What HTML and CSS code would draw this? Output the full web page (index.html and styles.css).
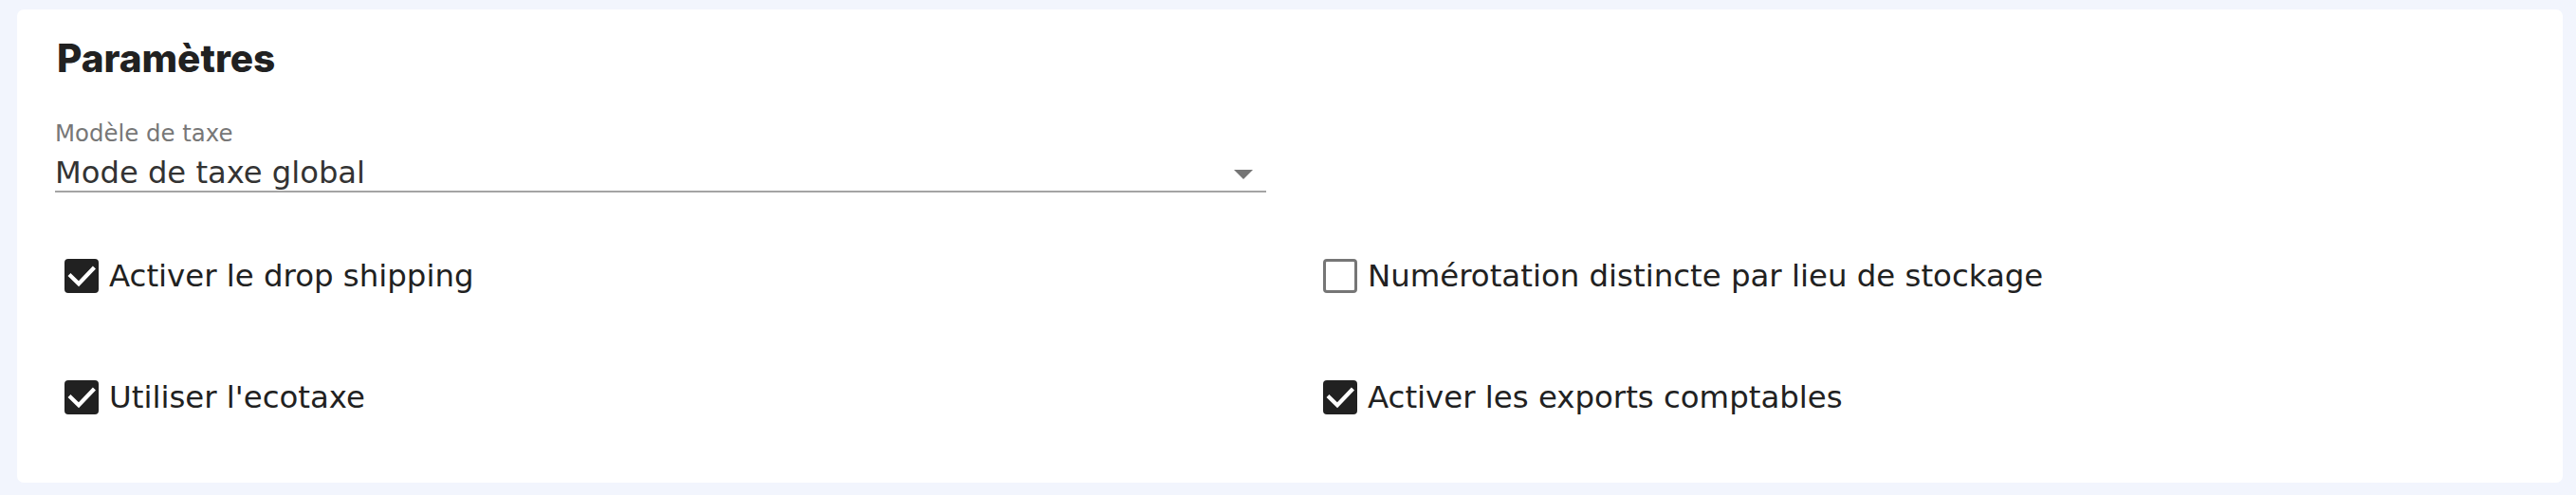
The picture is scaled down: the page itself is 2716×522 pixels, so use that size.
FILE: index.html
```html
<!DOCTYPE html>
<html lang="fr">
<head>
<meta charset="utf-8">
<title>Paramètres</title>
<link rel="stylesheet" href="styles.css">
</head>
<body>
<section class="card">
  <h1 class="title">Paramètres</h1>
  <div class="grid">
    <div class="field">
      <label class="field-label">Modèle de taxe</label>
      <div class="select">
        <span class="select-value">Mode de taxe global</span>
        <svg class="select-arrow" width="20" height="10" viewBox="0 0 20 10"><path d="M0 0H20L10 10Z" fill="#757575"/></svg>
      </div>
    </div>
    <div class="spacer"></div>

    <label class="check">
      <span class="box checked">
        <svg width="36" height="36" viewBox="0 0 36 36"><path d="M6.5 18L15 26.3L30 10.5" fill="none" stroke="#fff" stroke-width="4.2" stroke-linecap="square"/></svg>
      </span>
      <span class="check-text">Activer le drop shipping</span>
    </label>
    <label class="check">
      <span class="box"></span>
      <span class="check-text">Numérotation distincte par lieu de stockage</span>
    </label>
    <label class="check">
      <span class="box checked">
        <svg width="36" height="36" viewBox="0 0 36 36"><path d="M6.5 18L15 26.3L30 10.5" fill="none" stroke="#fff" stroke-width="4.2" stroke-linecap="square"/></svg>
      </span>
      <span class="check-text">Utiliser l'ecotaxe</span>
    </label>
    <label class="check">
      <span class="box checked">
        <svg width="36" height="36" viewBox="0 0 36 36"><path d="M6.5 18L15 26.3L30 10.5" fill="none" stroke="#fff" stroke-width="4.2" stroke-linecap="square"/></svg>
      </span>
      <span class="check-text">Activer les exports comptables</span>
    </label>
  </div>
</section>
</body>
</html>
```
FILE: styles.css
```css
html, body {
  margin: 0;
  height: 100%;
}
body {
  background: #f2f5fd;
  padding: 10px 14px 13px 18px;
  box-sizing: border-box;
  font-family: "DejaVu Sans", sans-serif;
  color: #212121;
}
.card {
  background: #ffffff;
  border-radius: 7px;
  height: 100%;
  box-sizing: border-box;
  padding: 29px 40px 0 40px;
}
.title {
  margin: 0 0 0 2px;
  font-family: Inter, sans-serif;
  font-weight: 800;
  font-size: 40.5px;
  line-height: 46px;
  color: #212121;
}
.grid {
  display: grid;
  grid-template-columns: 1fr 1fr;
  column-gap: 50px;
  margin-top: 42px;
}
.field {
  display: flex;
  flex-direction: column;
  margin-bottom: 56px;
}
.field-label {
  font-size: 24.4px;
  line-height: 28px;
  color: #777777;
}
.select {
  margin-top: 8px;
  display: flex;
  align-items: center;
  justify-content: space-between;
  border-bottom: 2px solid #a4a4a4;
}
.select-value {
  font-size: 32.2px;
  line-height: 38px;
  color: #333333;
}
.select-arrow {
  margin-right: 14px;
  margin-bottom: -3px;
}
.check {
  display: flex;
  align-items: center;
  gap: 11px;
  height: 64px;
  padding-left: 10px;
  margin-bottom: 64px;
}
.box {
  width: 36px;
  height: 36px;
  box-sizing: border-box;
  border-radius: 4px;
  border: 3.5px solid #767676;
  flex: none;
}
.box.checked {
  border: none;
  background: #212121;
}
.box svg {
  display: block;
}
.check-text {
  font-size: 32.4px;
  line-height: 38px;
  color: #212121;
}
```
